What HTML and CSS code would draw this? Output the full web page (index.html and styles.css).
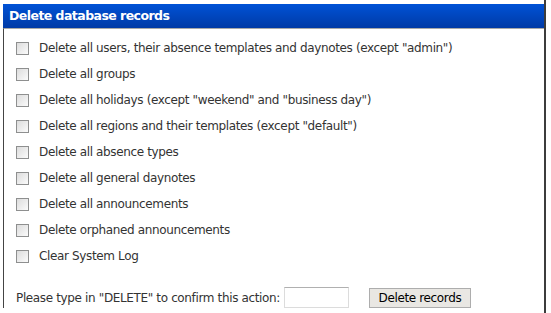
FILE: index.html
```html
<!DOCTYPE html>
<html lang="en">
<head>
    <meta charset="UTF-8">
    <title>Delete database records</title>
    <link rel="stylesheet" href="styles.css">
</head>
<body>

<div class="page">
    <div class="panel-head">Delete database records</div>
    <form class="panel-body">
        <label class="row"><input type="checkbox" name="users"> Delete all users, their absence templates and daynotes (except "admin")</label>
        <label class="row"><input type="checkbox" name="groups"> Delete all groups</label>
        <label class="row"><input type="checkbox" name="holidays"> Delete all holidays (except "weekend" and "business day")</label>
        <label class="row"><input type="checkbox" name="regions"> Delete all regions and their templates (except "default")</label>
        <label class="row"><input type="checkbox" name="absences"> Delete all absence types</label>
        <label class="row"><input type="checkbox" name="daynotes"> Delete all general daynotes</label>
        <label class="row"><input type="checkbox" name="announcements"> Delete all announcements</label>
        <label class="row"><input type="checkbox" name="orphans"> Delete orphaned announcements</label>
        <label class="row"><input type="checkbox" name="log"> Clear System Log</label>

        <div class="confirm">
            <span>Please type in "DELETE" to confirm this action:</span>
            <input type="text" class="confirm-input" name="confirm">
            <button type="submit">Delete records</button>
        </div>
    </form>
</div>

</body>
</html>
```

FILE: styles.css
```css
body {
    font-family: 'DejaVu Sans', Tahoma, sans-serif;
    font-size: 12px;
    letter-spacing: -0.36px;
    color: #333;
    background-color: #fff;
    margin: 0;
    padding: 0;
}

.page {
    margin-left: 3px;
    width: 543px;
    height: 313px;
    padding-top: 4px;
    box-sizing: border-box;
    border-right: 2px solid #3c3c3c;
}

.panel-head {
    height: 24px;
    line-height: 24px;
    padding-left: 6px;
    background: linear-gradient(to bottom, #0052d6, #003aa6);
    color: #fff;
    font-weight: bold;
    font-size: 12.5px;
    letter-spacing: -0.55px;
}

.panel-body {
    border-top: 1px solid #a8a8a8;
    border-left: 1px solid #444;
    height: 280px;
    padding: 6px 0 0 12px;
    box-sizing: border-box;
}

.row {
    display: flex;
    align-items: center;
    gap: 10px;
    height: 26px;
}

.row input[type="checkbox"] {
    appearance: none;
    margin: 0;
    width: 13px;
    height: 13px;
    border: 1px solid #8e8f8f;
    background: linear-gradient(135deg, #dcdcdc, #fbfbfb);
    box-sizing: border-box;
}

.confirm {
    display: flex;
    align-items: center;
    margin-top: 18px;
}

.confirm-input {
    width: 65px;
    height: 21px;
    margin: 0 20px 0 4px;
    padding: 0;
    border: 1px solid #dcdcdc;
    border-top-color: #b0b0b0;
    box-sizing: border-box;
}

button {
    width: 102px;
    height: 20px;
    padding: 0;
    font-family: 'DejaVu Sans', Tahoma, sans-serif;
    font-size: 12px;
    letter-spacing: -0.36px;
    color: #000;
    background-color: #e9e7e3;
    border: 1px solid #adadad;
}
```
